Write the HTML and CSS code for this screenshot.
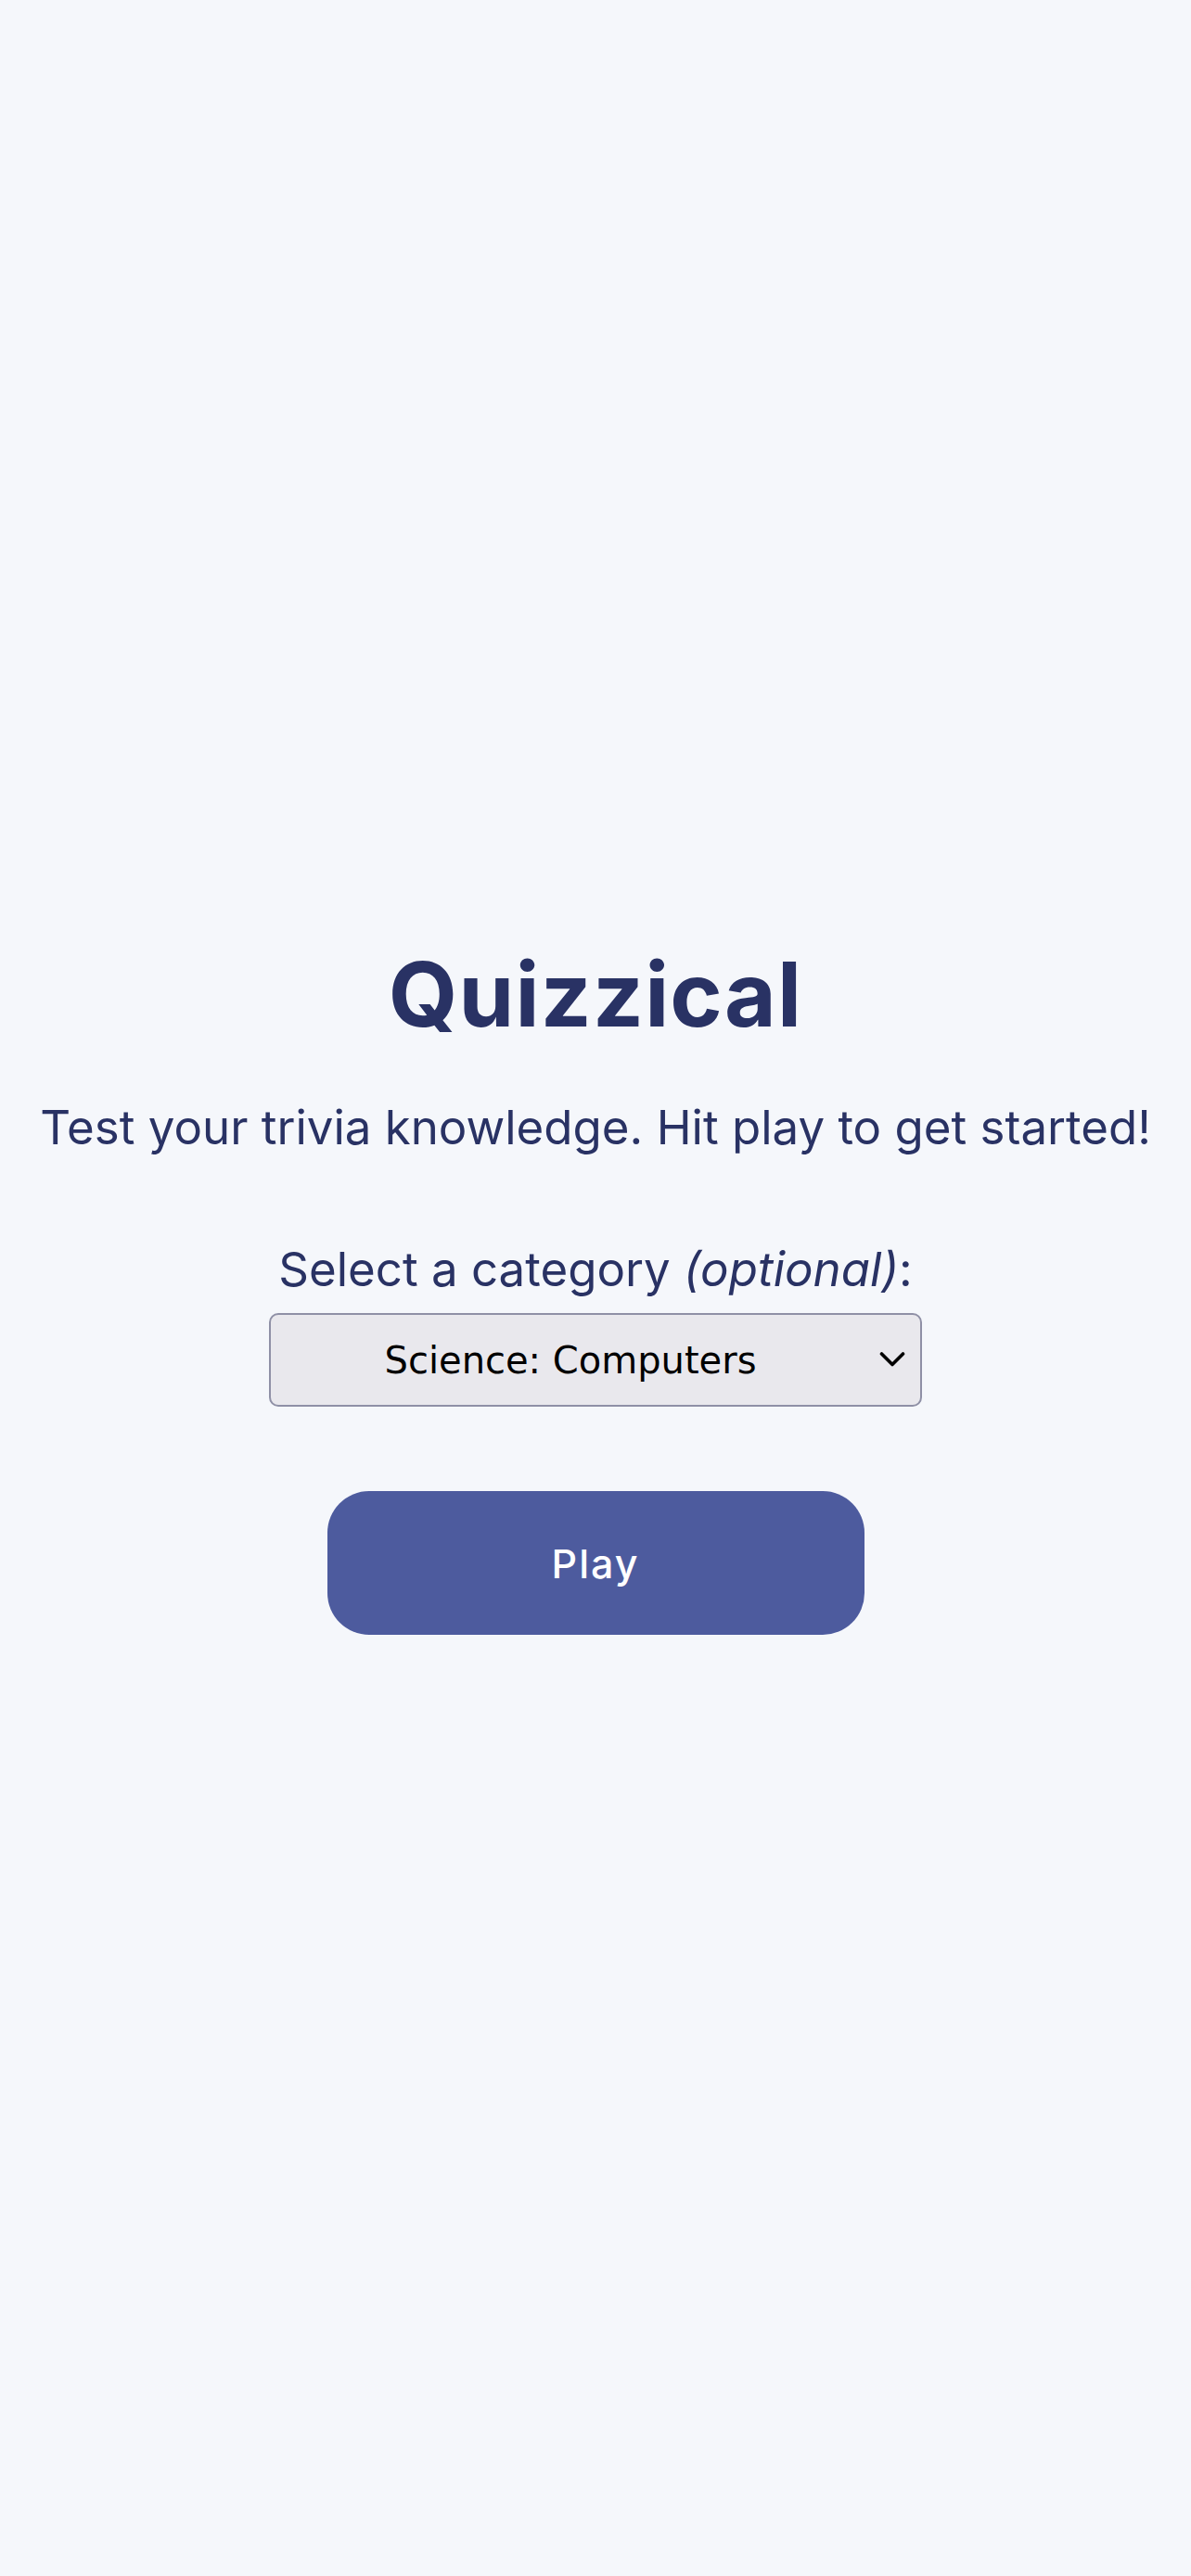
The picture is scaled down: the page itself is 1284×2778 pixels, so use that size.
FILE: index.html
```html
<!DOCTYPE html>
<html lang="en">
<head>
<meta charset="utf-8">
<title>Quizzical</title>
<link rel="stylesheet" href="styles.css">
</head>
<body>
<main class="start">
  <h1 class="start-title">Quizzical</h1>
  <p class="start-subtitle">Test your trivia knowledge. Hit play to get started!</p>
  <label class="category-label" for="category">Select a category <em>(optional)</em>:</label>
  <div class="select-wrap">
    <select id="category" class="category-select">
      <option>Any Category</option>
      <option selected>Science: Computers</option>
    </select>
    <svg class="select-chevron" width="28" height="18" viewBox="0 0 28 18" aria-hidden="true">
      <path d="M2.5 3 L14 14.5 L25.5 3" fill="none" stroke="#000" stroke-width="3.6" stroke-linecap="round" stroke-linejoin="round"/>
    </svg>
  </div>
  <button class="play-btn" type="button">Play</button>
</main>
</body>
</html>
```
FILE: styles.css
```css
html, body {
  margin: 0;
  padding: 0;
}
body {
  background: #f5f7fb;
  font-family: Inter, "Noto Sans", sans-serif;
  color: #293264;
}
.start {
  min-height: 2778px;
  display: flex;
  flex-direction: column;
  align-items: center;
  justify-content: center;
  text-align: center;
}
.start-title {
  margin: 0;
  font-size: 96px;
  line-height: 1.2;
  font-weight: 700;
  letter-spacing: 1.2px;
}
.start-subtitle {
  margin: 55px 0 0;
  font-size: 51px;
  line-height: 1.2;
  font-weight: 400;
}
.category-label {
  margin-top: 92px;
  font-size: 51px;
  line-height: 1.2;
}
.select-wrap {
  position: relative;
  margin-top: 17px;
}
.category-select {
  appearance: none;
  -webkit-appearance: none;
  box-sizing: border-box;
  width: 704px;
  height: 101px;
  border: 2px solid #8f90a6;
  border-radius: 10px;
  background: #e9e8ed;
  color: #000;
  font-family: "DejaVu Sans", Verdana, sans-serif;
  font-size: 40px;
  text-align: center;
  text-align-last: center;
  padding: 0 94px 0 40px;
}
.select-chevron {
  position: absolute;
  right: 18px;
  top: 41px;
  pointer-events: none;
}
.play-btn {
  margin-top: 91px;
  width: 579px;
  height: 155px;
  border: none;
  border-radius: 45px;
  background: #4d5b9e;
  color: #fff;
  font-family: Inter, sans-serif;
  font-size: 43px;
  font-weight: 500;
  letter-spacing: 2px;
  cursor: pointer;
}
```
